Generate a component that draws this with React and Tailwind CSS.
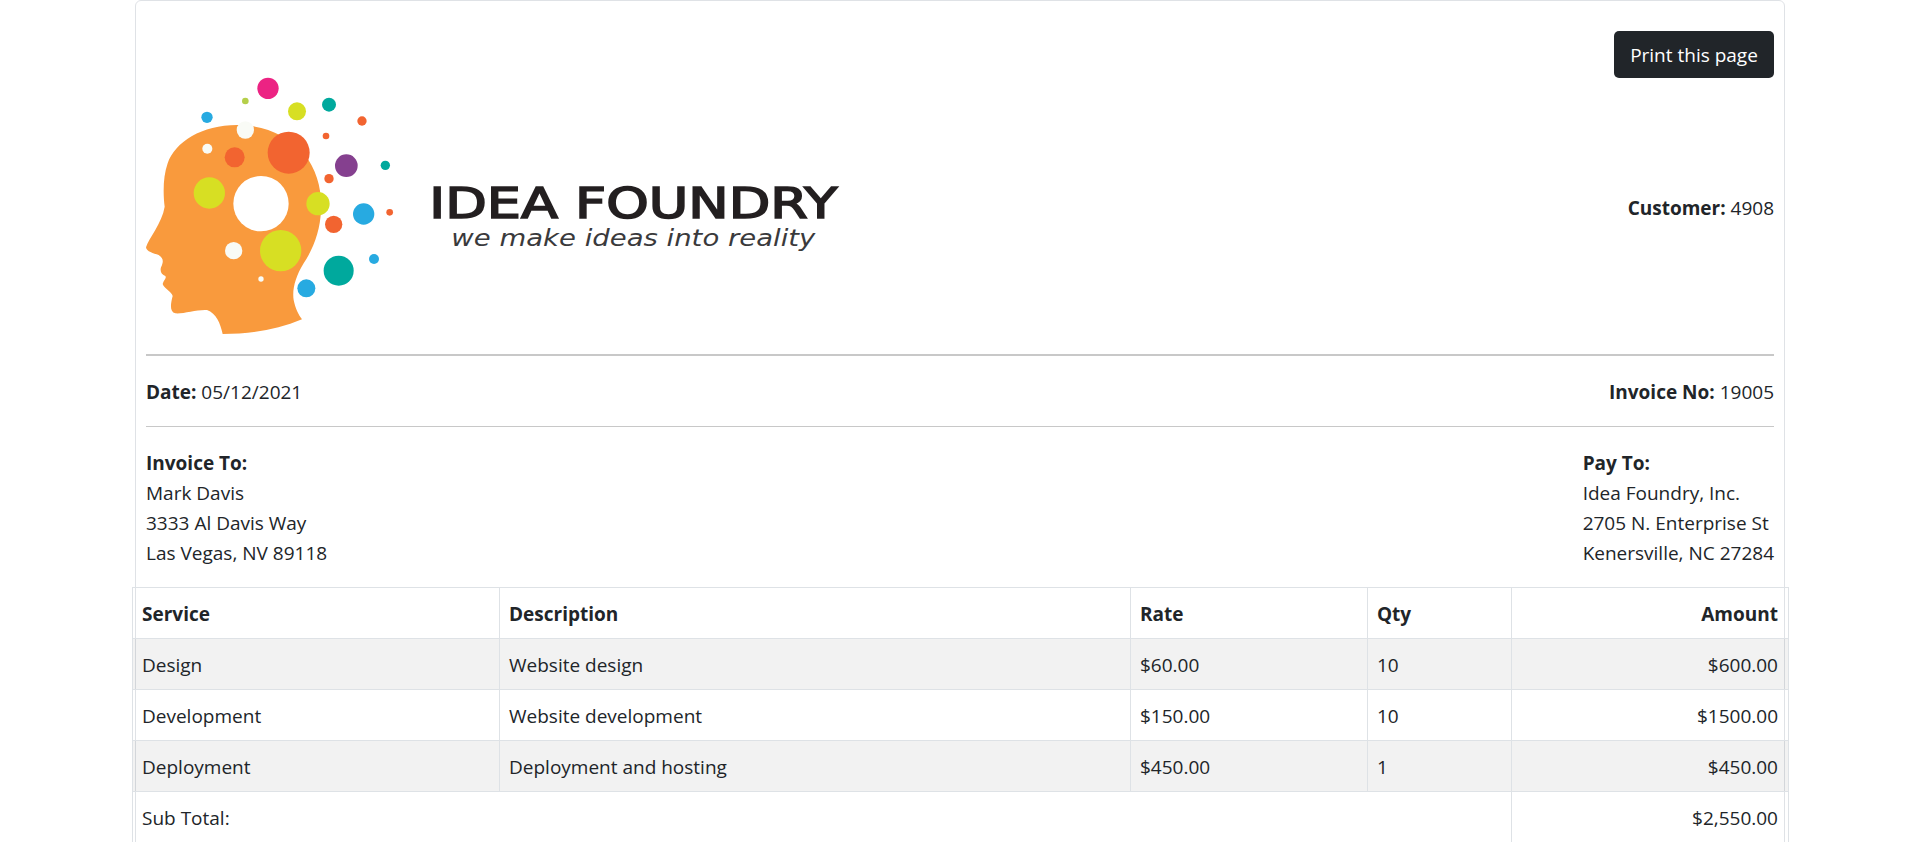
const rows = [
  ['Design', 'Website design', '$60.00', '10', '$600.00'],
  ['Development', 'Website development', '$150.00', '10', '$1500.00'],
  ['Deployment', 'Deployment and hosting', '$450.00', '1', '$450.00'],
]

const dots = [
  [413, 85, 32, '#ec2383'], [345, 123, 10, '#b5cf4a'], [230, 172, 17, '#27aae1'],
  [500, 154, 27, '#d7df23'], [596, 134, 21, '#00a99d'], [695, 183, 14, '#f26430'],
  [587, 228, 10, '#f26430'], [345, 210, 26, '#f9fbf6'], [231, 266, 15, '#f9fbf6'],
  [313, 292, 30, '#f26430'], [475, 278, 63, '#f26430'], [648, 317, 34, '#85408f'],
  [765, 316, 14, '#00a99d'], [596, 356, 14, '#f26430'], [237, 399, 47, '#d7df23'],
  [392, 431, 83, '#ffffff'], [563, 431, 35, '#d7df23'], [610, 493, 26, '#f26430'],
  [700, 462, 32, '#27aae1'], [778, 457, 10, '#f26430'], [310, 572, 26, '#f9fbf6'],
  [451, 572, 62, '#d7df23'], [731, 597, 15, '#27aae1'], [625, 632, 45, '#00a99d'],
  [528, 685, 27, '#27aae1'], [392, 657, 8, '#f9fbf6'],
]

function Logo() {
  return (
    <svg viewBox="47 0 2190 870" className="block h-[290px] w-[730px] shrink-0" aria-label="Idea Foundry">
      <path
        fill="#f99a3d"
        d="M277 822C270 790 258 760 230 750C200 748 160 762 135 760C118 755 120 735 127 708C125 695 100 685 97 672C100 660 110 655 105 648C95 645 88 635 92 622C100 605 100 595 85 585C70 580 48 575 47 562C55 535 95 490 103 440C98 400 98 350 112 310C135 245 215 195 320 195C400 195 470 225 520 280C560 330 575 390 572 450C570 510 550 565 520 610C495 650 485 690 490 720C495 745 505 765 515 778C440 810 360 822 277 822Z"
      />
      {dots.map(([cx, cy, r, fill]) => (
        <circle key={`${cx}-${cy}`} cx={cx} cy={cy} r={r} fill={fill} />
      ))}
      <text
        x="897"
        y="474"
        textLength="1224"
        lengthAdjust="spacingAndGlyphs"
        fill="#231f20"
        stroke="#231f20"
        strokeWidth="5"
        fontFamily="'DejaVu Sans', sans-serif"
        fontSize="128"
      >
        IDEA FOUNDRY
      </text>
      <text
        x="963"
        y="558"
        textLength="1092"
        lengthAdjust="spacingAndGlyphs"
        fill="#3a3a3c"
        fontFamily="'DejaVu Sans', sans-serif"
        fontStyle="italic"
        fontSize="68"
      >
        we make ideas into reality
      </text>
    </svg>
  )
}

function Cell({ children, right, head }) {
  return (
    <td
      className={`border border-[#dee2e6] pt-[11px] pb-[9px] pl-[9px] align-top ${right ? 'pr-[10px] text-right' : 'pr-[9px] text-left'} ${head ? 'font-bold' : ''}`}
    >
      {children}
    </td>
  )
}

export default function App() {
  return (
    <div className="h-screen overflow-hidden bg-white font-['Open_Sans',sans-serif] text-[19px] leading-[30px] text-[#212529]">
      <div className="mx-auto h-[870px] w-[1650px] rounded-md border border-[#dfe2e6] px-[10px]">
        <div className="flex justify-end pt-[30px]">
          <button className="h-[47px] w-[160px] rounded-[5px] bg-[#212529] text-center text-white">Print this page</button>
        </div>
        <div className="mt-[-18px] flex items-center justify-between">
          <Logo />
          <p className="mt-[6px]">
            <b>Customer:</b> 4908
          </p>
        </div>
        <hr className="mt-[4px] border-t-2 border-[#c8c8c8]" />
        <div className="flex justify-between pt-[21px] pb-[19px]">
          <p><b>Date:</b> 05/12/2021</p>
          <p><b>Invoice No:</b> 19005</p>
        </div>
        <hr className="border-t border-[#c8c8c8]" />
        <div className="flex justify-between pt-[21px]">
          <div>
            <b>Invoice To:</b>
            <p>Mark Davis</p>
            <p>3333 Al Davis Way</p>
            <p>Las Vegas, NV 89118</p>
          </div>
          <div>
            <b>Pay To:</b>
            <p>Idea Foundry, Inc.</p>
            <p>2705 N. Enterprise St</p>
            <p>Kenersville, NC 27284</p>
          </div>
        </div>
        <div className="mx-[-14px] mt-[19px]">
          <table className="w-[1657px] table-fixed border-collapse">
            <colgroup>
              <col className="w-[367px]" />
              <col className="w-[631px]" />
              <col className="w-[237px]" />
              <col className="w-[144px]" />
              <col />
            </colgroup>
            <tbody>
              <tr>
                <Cell head>Service</Cell>
                <Cell head>Description</Cell>
                <Cell head>Rate</Cell>
                <Cell head>Qty</Cell>
                <Cell head right>Amount</Cell>
              </tr>
              {rows.map((row, i) => (
                <tr key={row[0]} className={i % 2 === 0 ? 'bg-black/5' : ''}>
                  <Cell>{row[0]}</Cell>
                  <Cell>{row[1]}</Cell>
                  <Cell>{row[2]}</Cell>
                  <Cell>{row[3]}</Cell>
                  <Cell right>{row[4]}</Cell>
                </tr>
              ))}
              <tr>
                <td colSpan={4} className="border border-[#dee2e6] pt-[11px] pb-[10px] pl-[9px]">Sub Total:</td>
                <td className="border border-[#dee2e6] pt-[11px] pb-[10px] pr-[10px] text-right">$2,550.00</td>
              </tr>
            </tbody>
          </table>
        </div>
      </div>
    </div>
  )
}
